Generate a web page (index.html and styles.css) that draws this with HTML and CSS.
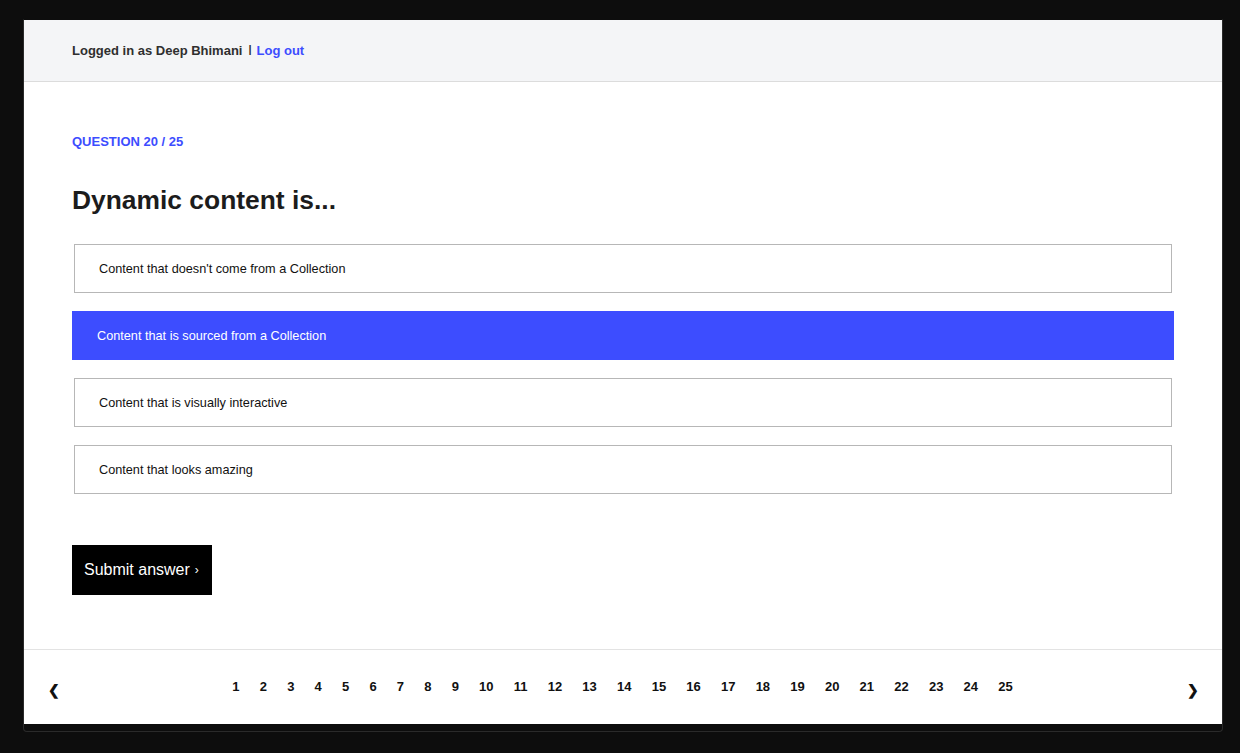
FILE: index.html
```html
<!DOCTYPE html>
<html lang="en">
<head>
<meta charset="utf-8">
<title>Quiz</title>
<link rel="stylesheet" href="styles.css">
</head>
<body>
<div class="frame">
  <div class="card">
    <header class="topbar">
      <span class="user">Logged in as Deep Bhimani</span>
      <span class="sep">|</span>
      <a class="logout" href="#">Log out</a>
    </header>
    <main class="main">
      <div class="qlabel">QUESTION 20 / 25</div>
      <h1 class="qtitle">Dynamic content is...</h1>
      <div class="options">
        <div class="option">Content that doesn't come from a Collection</div>
        <div class="option selected">Content that is sourced from a Collection</div>
        <div class="option">Content that is visually interactive</div>
        <div class="option">Content that looks amazing</div>
      </div>
      <button class="submit">Submit answer <span class="chev">›</span></button>
    </main>
    <footer class="pager">
      <span class="arrow">❮</span>
      <div class="pages">
        <span>1</span><span>2</span><span>3</span><span>4</span><span>5</span><span>6</span><span>7</span><span>8</span><span>9</span><span>10</span><span>11</span><span>12</span><span>13</span><span>14</span><span>15</span><span>16</span><span>17</span><span>18</span><span>19</span><span>20</span><span>21</span><span>22</span><span>23</span><span>24</span><span>25</span>
      </div>
      <span class="arrow">❯</span>
    </footer>
  </div>
</div>
</body>
</html>
```
FILE: styles.css
```css
* { box-sizing: border-box; }
html, body { margin: 0; padding: 0; }
body {
  background: #0d0d0d;
  font-family: "Liberation Sans", Arial, Helvetica, sans-serif;
  color: #111;
}
.frame {
  margin: 19px 0 0 23px;
  width: 1200px;
  border: 1px solid #2a2a2a;
  border-top-color: #0d0d0d;
  border-radius: 0 0 4px 4px;
  padding-bottom: 7px;
}
.card {
  background: #fff;
  width: 1198px;
}
.topbar {
  height: 62px;
  background: #f4f5f7;
  border-bottom: 1px solid #dcdcdc;
  display: flex;
  align-items: center;
  padding: 0 48px;
  font-size: 13px;
  font-weight: bold;
}
.user { color: #2f2f2f; }
.sep { color: #2f2f2f; font-size: 11px; margin: -3px 5px 0 6px; font-weight: bold; }
.logout { color: #3d4dff; text-decoration: none; }
.main {
  padding: 52px 48px 54px;
}
.qlabel {
  color: #3d4dff;
  font-size: 13px;
  font-weight: bold;
  line-height: 16px;
}
.qtitle {
  margin: 34px 0 0;
  font-size: 26.4px;
  line-height: 32px;
  font-weight: bold;
  color: #1c1c1c;
}
.options {
  margin-top: 28px;
  display: flex;
  flex-direction: column;
  gap: 18px;
}
.option {
  height: 49px;
  margin: 0 2px;
  border: 1px solid #b7b7b7;
  padding: 0 24px;
  display: flex;
  align-items: center;
  font-size: 12.7px;
  color: #111;
}
.option.selected {
  margin: 0;
  background: #3d4dff;
  border-color: #3d4dff;
  color: #fff;
}
.submit {
  margin-top: 51px;
  height: 50px;
  padding: 0 13px 0 12px;
  background: #000;
  color: #fff;
  border: none;
  font-family: "Liberation Sans", Arial, Helvetica, sans-serif;
  font-size: 16px;
  display: flex;
  align-items: center;
  gap: 5px;
}
.chev { font-size: 12px; }
.pager {
  height: 75px;
  border-top: 1px solid #e3e3e3;
  display: flex;
  align-items: center;
  justify-content: space-between;
  padding: 0 25px 0 24px;
}
.arrow {
  font-size: 14px;
  font-weight: bold;
  width: 10px;
  margin-top: 6px;
  color: #111;
}
.pages {
  display: flex;
  font-size: 13px;
  font-weight: bold;
  color: #111;
  margin-top: -2px;
}
.pages span { padding: 0 10.1px; }
```
